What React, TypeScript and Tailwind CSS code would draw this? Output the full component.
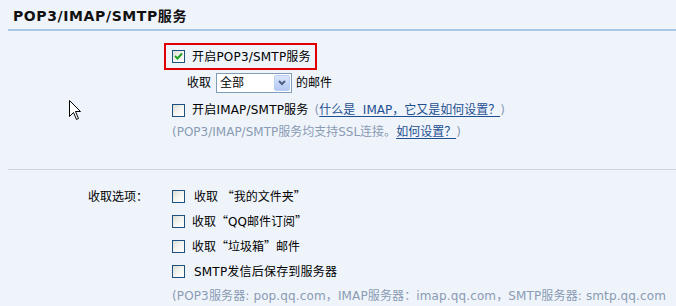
import React from "react";

function Box({ checked = false }: { checked?: boolean }) {
  return (
    <span className="relative inline-block w-[13px] h-[13px] shrink-0 border border-[#1c5180] bg-gradient-to-br from-[#dcdcd6] via-[#f4f4f0] to-[#ffffff]">
      {checked && (
        <svg className="absolute left-[1px] top-[1px]" width="9" height="9" viewBox="0 0 9 9">
          <path d="M1 4 L3.5 6.5 L8 1.5" fill="none" stroke="#21a121" strokeWidth="2" />
        </svg>
      )}
    </span>
  );
}

function Q({ children }: { children: React.ReactNode }) {
  return <span className="font-['Noto_Sans_CJK_SC',sans-serif]">{children}</span>;
}

export default function App() {
  return (
    <div className="relative w-[676px] h-[306px] overflow-hidden bg-[#eff4fb] text-[12px] text-[#000] font-['DejaVu_Sans','Noto_Sans_CJK_SC',sans-serif]">
      {/* header */}
      <div className="ml-[8px] pl-[5px] pt-[6px] pb-[3px] border-b-2 border-[#a9c8e8]">
        <div className="text-[14px] leading-[20px] font-bold tracking-[0.6px] text-[#111]">POP3/IMAP/SMTP服务</div>
      </div>

      {/* section 1 */}
      <div className="pt-[12px]">
        <div className="ml-[164px] w-[153px] h-[27px] border-2 border-[#e00000] flex items-center pl-[6px]">
          <Box checked />
          <span className="ml-[7px] leading-[14px] whitespace-nowrap tracking-[0.2px]">开启POP3/SMTP服务</span>
        </div>
        <div className="mt-[3px] ml-[187px] h-[20px] flex items-center whitespace-nowrap">
          <span>收取</span>
          <div className="ml-[5px] w-[76px] h-[20px] border border-[#7f9db9] bg-white flex items-center">
            <span className="pl-[3px] flex-1 leading-[14px]">全部</span>
            <span className="w-[16px] h-[16px] mr-[1px] rounded-[2px] bg-gradient-to-b from-[#dbe6fb] to-[#b4c8f4] border border-[#bccdf3] flex items-center justify-center">
              <svg width="8" height="6" viewBox="0 0 8 6">
                <path d="M1 1 L4 4 L7 1" fill="none" stroke="#4d6185" strokeWidth="2" />
              </svg>
            </span>
          </div>
          <span className="ml-[4px]">的邮件</span>
        </div>
        <div className="mt-[6px] ml-[172px] h-[22px] flex items-center whitespace-nowrap">
          <Box />
          <span className="ml-[7px] tracking-[0.2px]">开启IMAP/SMTP服务</span>
          <span className="ml-[6px] text-[#8a9bb3]">(</span>
          <span className="text-[#1e4f91] underline underline-offset-2">什么是&nbsp; IMAP，它又是如何设置？</span>
          <span className="text-[#8a9bb3]">)</span>
        </div>
        <div className="ml-[172px] h-[22px] flex items-center whitespace-nowrap text-[#8a9bb3]">
          <span>(POP3/IMAP/SMTP服务均支持SSL连接。</span>
          <span className="text-[#1e4f91] underline underline-offset-2">如何设置？</span>
          <span>)</span>
        </div>
        <div className="h-[26px]" />
      </div>

      <div className="ml-[8px] border-t border-[#cdd5de]" />

      {/* section 2 */}
      <div className="pt-[14px] flex">
        <div className="w-[172px] pl-[88px] h-[25px] flex items-center whitespace-nowrap">收取选项：</div>
        <div className="flex flex-col">
          <div className="h-[25px] flex items-center whitespace-nowrap">
            <Box />
            <span className="ml-[9px]">收取 <Q>“</Q>我的文件夹<Q>”</Q></span>
          </div>
          <div className="h-[25px] flex items-center whitespace-nowrap">
            <Box />
            <span className="ml-[7px]">收取<Q>“</Q>QQ邮件订阅<Q>”</Q></span>
          </div>
          <div className="h-[25px] flex items-center whitespace-nowrap">
            <Box />
            <span className="ml-[7px]">收取<Q>“</Q>垃圾箱<Q>”</Q>邮件</span>
          </div>
          <div className="h-[25px] flex items-center whitespace-nowrap">
            <Box />
            <span className="ml-[9px] tracking-[0.2px]">SMTP发信后保存到服务器</span>
          </div>
          <div className="h-[23px] flex items-center whitespace-nowrap text-[#8a9bb3] tracking-[0.13px]">
            (POP3服务器: pop.qq.com，IMAP服务器：imap.qq.com，SMTP服务器: smtp.qq.com
          </div>
        </div>
      </div>

      {/* mouse cursor */}
      <svg className="absolute left-[69px] top-[100px]" width="12" height="21" viewBox="0 0 12 21">
        <path d="M0.5 0.5 L0.5 16.5 L4.5 12.5 L7.5 19.5 L9.5 18.5 L6.5 11.5 L11.5 11.5 Z" fill="#fff" stroke="#000" strokeWidth="1" />
      </svg>
    </div>
  );
}
